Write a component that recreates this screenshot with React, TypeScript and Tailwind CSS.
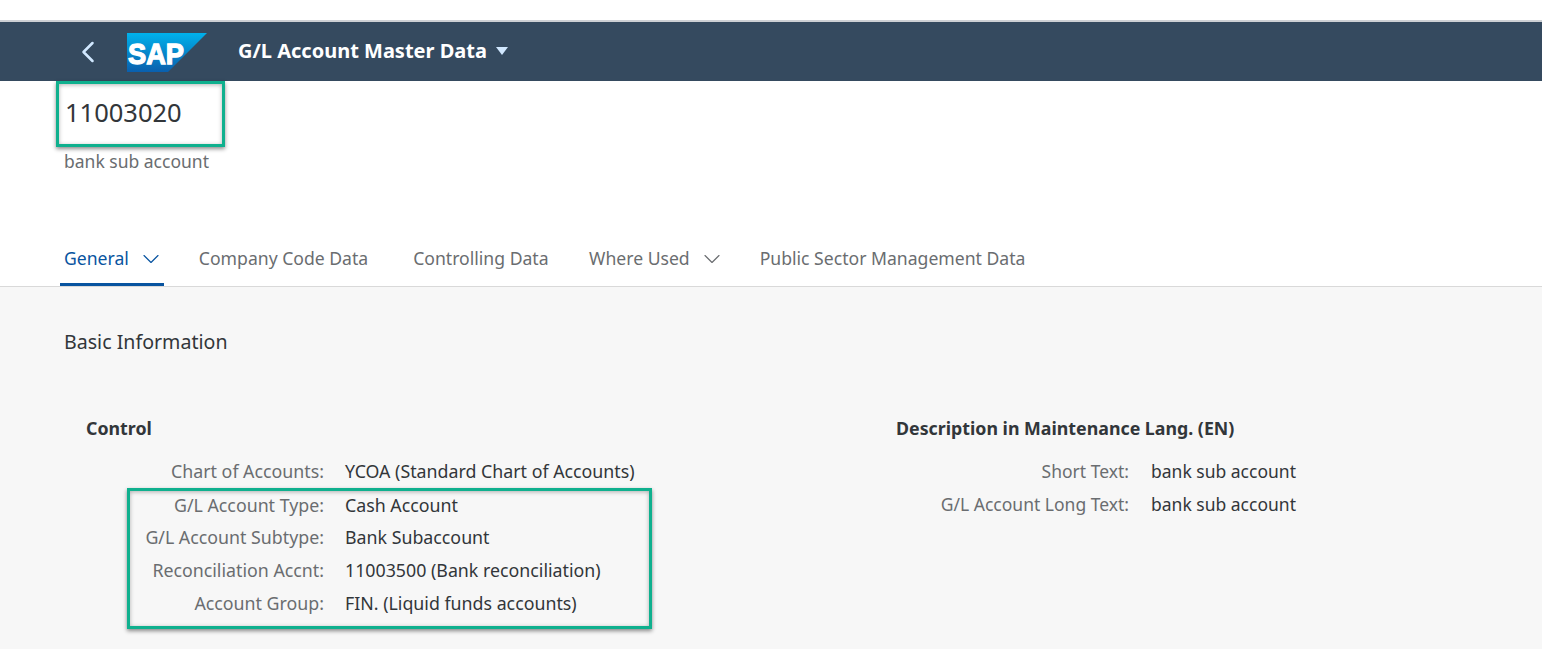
import { ChevronDown, ChevronLeft } from 'lucide-react';

const tabs = [
  { label: 'General', chevron: true, active: true, gap: 'mr-[31px]' },
  { label: 'Company Code Data', gap: 'mr-[37px]' },
  { label: 'Controlling Data', gap: 'mr-[32.5px]' },
  { label: 'Where Used', chevron: true, gap: 'mr-[31px]' },
  { label: 'Public Sector Management Data', gap: 'mr-0' },
];

const highlighted = [
  ['G/L Account Type:', 'Cash Account'],
  ['G/L Account Subtype:', 'Bank Subaccount'],
  ['Reconciliation Accnt:', '11003500 (Bank reconciliation)'],
  ['Account Group:', 'FIN. (Liquid funds accounts)'],
];

function Row({ label, value, labelWidth, gap = 'ml-[21px]' }: { label: string; value: string; labelWidth: string; gap?: string }) {
  return (
    <div className="flex h-[32.7px] items-center">
      <span className={`${labelWidth} shrink-0 text-right text-[#6a6d70]`}>{label}</span>
      <span className={`${gap} text-[#32363a]`}>{value}</span>
    </div>
  );
}

function SapLogo() {
  return (
    <svg width="80" height="39" viewBox="0 0 80 39" className="shrink-0">
      <defs>
        <linearGradient id="sapBlue" x1="0" y1="0" x2="0" y2="1">
          <stop offset="0" stopColor="#00b1eb" />
          <stop offset="1" stopColor="#0a5fad" />
        </linearGradient>
      </defs>
      <polygon points="0,0 80,0 41,39 0,39" fill="url(#sapBlue)" />
      <text
        x="1"
        y="31"
        fill="#fff"
        stroke="#fff"
        strokeWidth="1.3"
        fontSize="30"
        fontWeight="700"
        textLength="56"
        lengthAdjust="spacingAndGlyphs"
        fontFamily="'Liberation Sans', sans-serif"
      >
        SAP
      </text>
    </svg>
  );
}

export default function App() {
  return (
    <div className="h-[649px] overflow-hidden bg-white font-['Noto_Sans',sans-serif] text-[17.8px]">
      <div className="h-5" />
      {/* Shell bar */}
      <div className="flex h-[61px] items-center border-t-2 border-[#cdd0d4] bg-[#354a5f] text-white">
        <ChevronLeft className="ml-[70px] h-9 w-9 text-[#d1e8ff]" strokeWidth={1.7} />
        <div className="ml-[21px] mt-[1px]">
          <SapLogo />
        </div>
        <span className="ml-[31px] -mt-[2px] text-[20px] font-bold">G/L Account Master Data</span>
        <span className="ml-[9px] -mt-[1px] h-0 w-0 border-x-[6.5px] border-t-[8px] border-x-transparent border-t-[#d1e8ff]" />
      </div>

      {/* Object header */}
      <div className="h-[206px] border-b border-[#d9d9d9] pl-[56px]">
        <div className="flex h-[66px] w-[169px] border-[3px] border-[#0fb08e] pl-[6px] pt-[10px] text-[25.5px] leading-[36px] text-[#32363a] shadow-[0_2px_4px_rgba(0,0,0,0.45),inset_0_1px_4px_rgba(0,0,0,0.3)]">
          11003020
        </div>
        <div className="ml-[8px] mt-[2px] text-[17.5px] leading-[24px] text-[#6a6d70]">bank sub account</div>
        <div className="ml-[4px] mt-[67px] flex text-[17.6px]">
          {tabs.map((t) => (
            <div
              key={t.label}
              className={`${t.gap} flex h-[46px] items-start border-b-[3px] px-[4px] pt-[6px] leading-[24px] ${
                t.active ? 'border-[#0854a0] text-[#0854a0]' : 'border-transparent text-[#6a6d70]'
              }`}
            >
              {t.label}
              {t.chevron && <ChevronDown className="-mr-[5px] ml-[8px] -mt-[1px] h-7 w-7" strokeWidth={1} />}
            </div>
          ))}
        </div>
      </div>

      {/* Section */}
      <div className="h-[362px] bg-[#f7f7f7] pl-[64px]">
        <div className="pt-[41px] text-[19.6px] leading-[28px] text-[#32363a]">Basic Information</div>
        <div className="mt-[60px] flex">
          <div className="w-[832px]">
            <div className="ml-[22px] font-bold leading-[24px] text-[#32363a]">Control</div>
            <div className="ml-[63px] mt-[15px] w-[525px]">
              <Row label="Chart of Accounts:" value="YCOA (Standard Chart of Accounts)" labelWidth="w-[197px]" />
              <div className="h-[141px] border-[3px] border-[#0fb08e] shadow-[0_2px_4px_rgba(0,0,0,0.45),inset_0_1px_4px_rgba(0,0,0,0.3)]">
                <div className="-mt-[2px]">
                  {highlighted.map(([label, value]) => (
                    <Row key={label} label={label} value={value} labelWidth="w-[194px]" />
                  ))}
                </div>
              </div>
            </div>
          </div>
          <div>
            <div className="font-bold leading-[24px] text-[#32363a]">Description in Maintenance Lang. (EN)</div>
            <div className="-ml-[96px] mt-[15px] text-[17.5px]">
              <Row label="Short Text:" value="bank sub account" labelWidth="w-[329px]" gap="ml-[22px]" />
              <Row label="G/L Account Long Text:" value="bank sub account" labelWidth="w-[329px]" gap="ml-[22px]" />
            </div>
          </div>
        </div>
      </div>
    </div>
  );
}
